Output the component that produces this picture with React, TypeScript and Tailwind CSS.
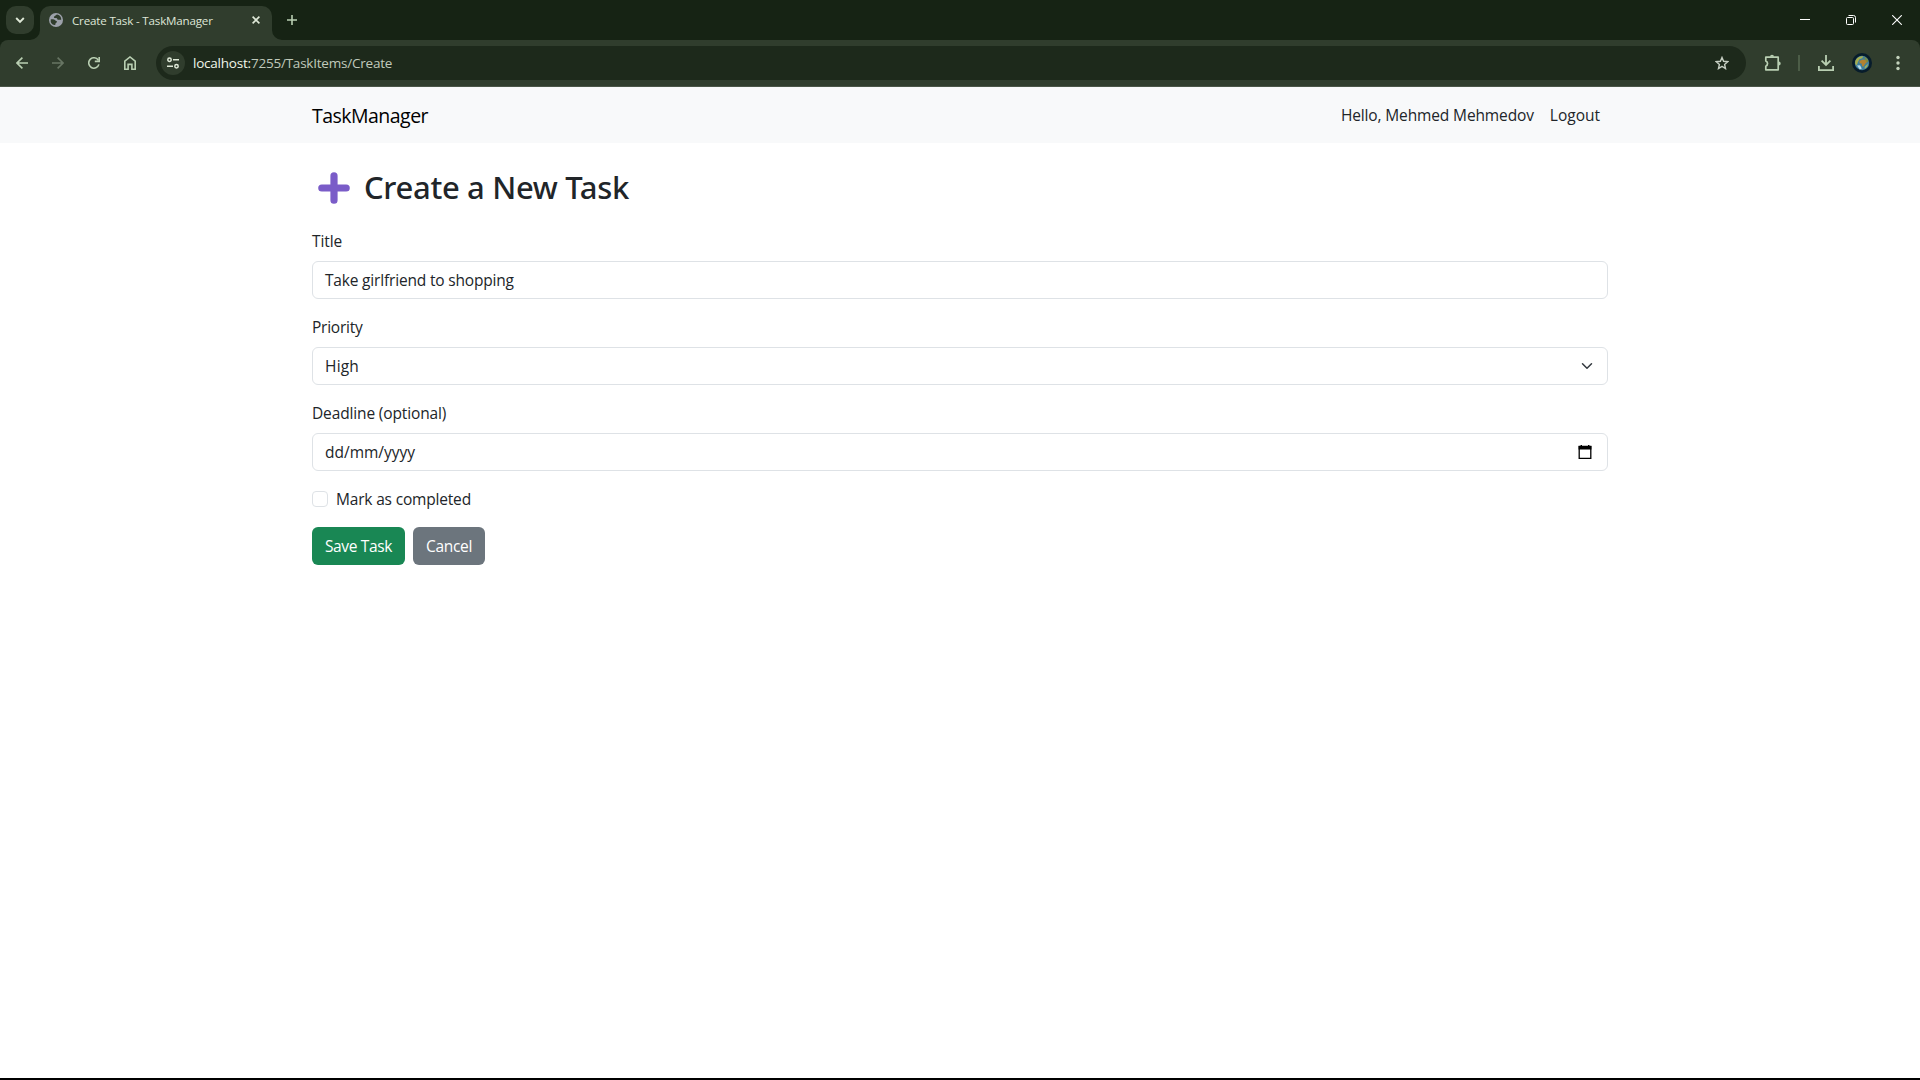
import type { ReactNode } from "react";

function TabStrip() {
  return (
    <div className="flex h-[40px] shrink-0 bg-[#162314] pl-[6px]">
      <div className="mt-[6px] flex h-[28px] w-[28px] items-center justify-center rounded-[10px] bg-[#303d2d]">
        <svg width="10" height="8" viewBox="0 0 10 8" fill="none" stroke="#dfe9d8" strokeWidth="1.9">
          <path d="M1.2 2 5 5.8 8.8 2" />
        </svg>
      </div>
      <div className="relative ml-[6px] mt-[6px] flex h-[34px] w-[232px] items-start rounded-t-[10px] bg-[#303d2d] pl-[9px] pt-[7px]">
        <svg className="absolute bottom-0 left-[-10px]" width="10" height="10" viewBox="0 0 10 10">
          <path d="M10 0v10H0A10 10 0 0 0 10 0Z" fill="#303d2d" />
        </svg>
        <svg className="absolute bottom-0 right-[-10px]" width="10" height="10" viewBox="0 0 10 10">
          <path d="M0 0v10h10A10 10 0 0 1 0 0Z" fill="#303d2d" />
        </svg>
        <svg width="14" height="14" viewBox="0 0 14 14">
          <circle cx="7" cy="7" r="7" fill="#9ca1aa" />
          <path
            d="M8.3 1.6C6.8 1.9 6.7 3 5.6 3.2c-.9.2-1 1.5 0 1.8.9.3 2.4-.2 2.7.9.2.9 1.3.9 2.2.8.8 0 1.3-.3 1.7.5A5.4 5.4 0 0 0 8.3 1.6Z"
            fill="#303d2d"
          />
          <path
            d="M1.7 6.4c1.5-.3 3.6-.2 4.5.9.5.7 1.8.6 1.8 1.5 0 1-1.4.9-1.5 1.9 0 .8-.3 1.5-1 1.4A5.3 5.3 0 0 1 1.7 6.4Z"
            fill="#303d2d"
          />
        </svg>
        <span className="ml-[9px] mt-[-1px] whitespace-nowrap text-[11.6px] leading-[18px] tracking-[-0.18px] text-[#dfe6d8]">
          Create Task - TaskManager
        </span>
        <svg className="absolute left-[212px] top-[10px]" width="8" height="8" viewBox="0 0 8 8" stroke="#dfe9d8" strokeWidth="1.6">
          <path d="m.6.6 6.8 6.8M7.4.6.6 7.4" />
        </svg>
      </div>
      <svg className="ml-[15px] mt-[15px]" width="10" height="10" viewBox="0 0 10 10" stroke="#b9cfb2" strokeWidth="1.6">
        <path d="M5 0v10M0 5h10" />
      </svg>
      <div className="ml-auto flex">
        <div className="flex w-[46px] items-center justify-center">
          <svg width="10" height="10" viewBox="0 0 10 10" stroke="#fff" strokeWidth="1">
            <path d="M0 4.5h10" />
          </svg>
        </div>
        <div className="flex w-[46px] items-center justify-center">
          <svg width="10" height="10" viewBox="0 0 10 10" stroke="#fff" strokeWidth="1" fill="none">
            <rect x=".5" y="2.5" width="7" height="7" rx="1" />
            <path d="M2.5 .5h5a2 2 0 0 1 2 2v5" />
          </svg>
        </div>
        <div className="flex w-[46px] items-center justify-center">
          <svg width="10" height="10" viewBox="0 0 10 10" stroke="#fff" strokeWidth="1.1">
            <path d="m.2.2 9.6 9.6M9.8.2.2 9.8" />
          </svg>
        </div>
      </div>
    </div>
  );
}

function NavButton({ children }: { children: ReactNode }) {
  return <div className="flex w-[36px] items-center justify-center">{children}</div>;
}

function Toolbar() {
  return (
    <div className="h-[47px] shrink-0 bg-[#162314]">
      <div className="flex h-[47px] items-center rounded-t-[8px] border-b border-[#4a5547] bg-[#303d2d] pl-[4px]">
        <NavButton>
          <svg width="12" height="12" viewBox="0 0 12 12" fill="none" stroke="#b9cfb2" strokeWidth="1.6">
            <path d="M12 6H1.2M6.4.6 1 6l5.4 5.4" />
          </svg>
        </NavButton>
        <NavButton>
          <svg width="12" height="12" viewBox="0 0 12 12" fill="none" stroke="#677563" strokeWidth="1.6">
            <path d="M0 6h10.8M5.6.6 11 6l-5.4 5.4" />
          </svg>
        </NavButton>
        <NavButton>
          <svg width="12" height="12" viewBox="0 0 12 12" fill="none" stroke="#b9cfb2" strokeWidth="1.6">
            <path d="M10.9 7.4A5.2 5.2 0 1 1 10.3 3.2" />
            <path d="M11.2 0v4.4H6.8" />
          </svg>
        </NavButton>
        <NavButton>
          <svg width="12" height="14" viewBox="0 0 12 14" fill="none" stroke="#b9cfb2" strokeWidth="1.6">
            <path d="M.8 13.2V5.2L6 1l5.2 4.2v8H7.9V8.4H4.1v4.8Z" />
          </svg>
        </NavButton>
        <div className="ml-[8px] flex h-[34px] w-[1590px] items-center rounded-full bg-[#1d291b] pl-[5px] pr-[17px]">
          <div className="flex h-[24px] w-[24px] items-center justify-center rounded-full bg-[#303d2d]">
            <svg width="12" height="12" viewBox="0 0 12 12" fill="none" stroke="#dfe9d8" strokeWidth="1.5">
              <circle cx="2.5" cy="2.7" r="1.7" />
              <path d="M6 2.7h6M0 9.3h6" />
              <circle cx="9.5" cy="9.3" r="1.7" />
            </svg>
          </div>
          <span className="ml-[8px] whitespace-nowrap text-[13.5px] leading-[20px] tracking-[-0.22px] text-[#c0c9bb]">
            <span className="text-[#f0f6ea]">localhost:</span>7255/TaskItems/Create
          </span>
          <svg className="ml-auto" width="14" height="14" viewBox="0 0 14 14" fill="none" stroke="#c6cec3" strokeWidth="1.4">
            <path d="m7 1.5 1.6 3.8 4.1.4-3.1 2.7.9 4.1L7 10.3l-3.5 2.2.9-4.1-3.1-2.7 4.1-.4Z" />
          </svg>
        </div>
        <svg className="ml-[18px]" width="18" height="18" viewBox="0 0 18 18">
          <path
            d="M1.8 3.2h12.4v12.6H1.8v-3.6a2.8 2.8 0 0 0 0-5.2Z"
            fill="none"
            stroke="#b9cfb2"
            strokeWidth="1.7"
            strokeLinejoin="round"
          />
          <path d="M6 2.8a2 2 0 0 1 4 0ZM14.7 7.5a2 2 0 0 1 0 4Z" fill="#b9cfb2" />
        </svg>
        <div className="ml-[16px] h-[16px] w-[2px] bg-[#4c5d47]" />
        <svg className="ml-[18px]" width="16" height="16" viewBox="0 0 16 16" fill="none" stroke="#b9cfb2" strokeWidth="1.8">
          <path d="M8 0v9.6M3.6 5.6 8 10l4.4-4.4M.9 11v4.1h14.2V11" />
        </svg>
        <svg className="ml-[18px]" width="20" height="20" viewBox="0 0 20 20">
          <circle cx="10" cy="10" r="10" fill="#071c2b" />
          <circle cx="10" cy="10" r="7.2" fill="#3f7f9e" />
          <path d="M3.2 8.4C4.2 4.8 8 2.9 11.4 3.2L10.2 5.2 7.4 6.2 6 9 4.6 12.4 3.2 11Z" fill="#a6ad4e" />
          <path d="M7.4 8 10.6 6.4l3.4.6 1.2 1.9-2 1.8-1.8 3-1.4-.6-.2-2.4-2.2-.8Z" fill="#b2822f" />
          <path d="M12.2 3.8c2 .8 3.8 2.4 4.2 4.6l-1.6 1-1.4-2.6Z" fill="#7e8c3c" />
          <path d="M5 12.6 8 12.2l1.8 3.4-2 1Z" fill="#b9dbe6" />
          <path d="m12.6 13.8 3.4-3.2-.6 3-2.6 2.4Z" fill="#9fb05a" />
        </svg>
        <svg className="ml-[24px]" width="4" height="16" viewBox="0 0 4 16" fill="#c3d3bc">
          <circle cx="2" cy="2.5" r="1.7" />
          <circle cx="2" cy="8" r="1.7" />
          <circle cx="2" cy="13.5" r="1.7" />
        </svg>
      </div>
    </div>
  );
}

function Navbar() {
  return (
    <nav className="h-[56px] shrink-0 bg-[#f8f9fa]">
      <div className="mx-auto flex h-full w-[1296px] items-center">
        <a className="pt-[2px] text-[19.5px] leading-[30px] tracking-[-0.52px] text-black">TaskManager</a>
        <a className="ml-auto mr-[16px] tracking-[-0.13px]">Hello, Mehmed Mehmedov</a>
        <a className="mr-[8px]">Logout</a>
      </div>
    </nav>
  );
}

function Field({ label, children }: { label: ReactNode; children: ReactNode }) {
  return (
    <div className="mb-4">
      <div className="mb-2 h-6">{label}</div>
      <div className="flex h-[38px] items-center justify-between rounded-[6px] border border-[#dee2e6] bg-white px-3">
        {children}
      </div>
    </div>
  );
}

function TaskForm() {
  return (
    <main className="mx-auto w-[1296px] pt-6">
      <h2 className="mb-6 flex h-[38.4px] items-center">
        <svg className="ml-[6px] mt-[3px]" width="32" height="32" viewBox="0 0 32 32" stroke="#7a5cc8" strokeWidth="7.2" strokeLinecap="round">
          <path d="M16 3.8v24.4M3.8 16h24.4" />
        </svg>
        <span className="ml-[14px] whitespace-nowrap pt-[2px] font-['Noto_Sans'] text-[31px] font-medium leading-[38px] tracking-[-0.33px]">
          Create a New Task
        </span>
      </h2>
      <Field label={<span className="tracking-[-0.1px]">Title</span>}>
        <span className="tracking-[-0.18px]">Take girlfriend to shopping</span>
      </Field>
      <Field label={<span className="tracking-[-0.24px]">Priority</span>}>
        <span className="tracking-[0.2px]">High</span>
        <svg className="mr-0.5" width="12" height="12" viewBox="0 0 16 16" fill="none" stroke="#343a40" strokeWidth="2" strokeLinecap="round" strokeLinejoin="round">
          <path d="m2 5 6 6 6-6" />
        </svg>
      </Field>
      <Field label={<span className="tracking-[-0.14px]">Deadline (optional)</span>}>
        <span>dd/mm/yyyy</span>
        <svg className="mr-[3px]" width="14" height="14" viewBox="0 0 14 14">
          <path d="M1.2 1.5h11.6v11.8H1.2Z" fill="none" stroke="#000" strokeWidth="1.3" />
          <path d="M.6 1h12.8v3.4H.6ZM2.6 0H4v1.5H2.6ZM10 0h1.4v1.5H10Z" />
        </svg>
      </Field>
      <div className="mb-4 flex h-6 items-center">
        <div className="mr-2 h-4 w-4 rounded-[4px] border border-[#dee2e6] bg-white" />
        <span className="tracking-[-0.18px]">Mark as completed</span>
      </div>
      <div className="flex gap-2 text-white">
        <button className="h-[38px] w-[93px] whitespace-nowrap rounded-[6px] bg-[#198754] tracking-[-0.35px]">Save Task</button>
        <button className="h-[38px] w-[72px] whitespace-nowrap rounded-[6px] bg-[#6c757d] tracking-[-0.3px]">Cancel</button>
      </div>
    </main>
  );
}

export default function App() {
  return (
    <div className="flex h-[1080px] w-[1920px] flex-col overflow-hidden border-b-2 border-black bg-white font-['Open_Sans','Noto_Sans',sans-serif] text-[15.5px] leading-6 text-[#212529]">
      <TabStrip />
      <Toolbar />
      <Navbar />
      <TaskForm />
    </div>
  );
}
